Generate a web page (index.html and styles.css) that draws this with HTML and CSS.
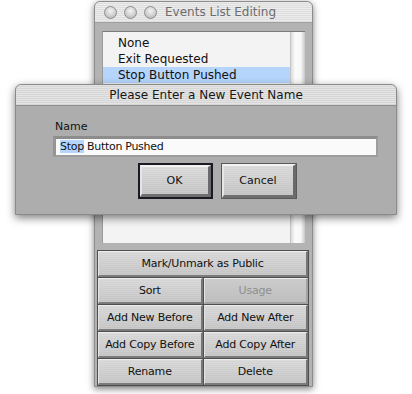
FILE: index.html
```html
<!DOCTYPE html>
<html lang="en">
<head>
    <meta charset="UTF-8">
    <title>Events List Editing</title>
    <link rel="stylesheet" href="styles.css">
</head>
<body>
    <div class="stage">

        <!-- Back window: event list -->
        <div class="window">
            <div class="titlebar">
                <div class="lights">
                    <span class="light"></span>
                    <span class="light"></span>
                    <span class="light"></span>
                </div>
                <div class="title">Events List Editing</div>
            </div>

            <div class="content">
                <div class="list">
                    <div class="items">
                        <div class="item">None</div>
                        <div class="item">Exit Requested</div>
                        <div class="item selected">Stop Button Pushed</div>
                    </div>
                    <div class="scroller"></div>
                </div>

                <div class="actions">
                    <div class="btn wide">Mark/Unmark as Public</div>
                    <div class="btn">Sort</div>
                    <div class="btn disabled">Usage</div>
                    <div class="btn">Add New Before</div>
                    <div class="btn">Add New After</div>
                    <div class="btn">Add Copy Before</div>
                    <div class="btn">Add Copy After</div>
                    <div class="btn">Rename</div>
                    <div class="btn">Delete</div>
                </div>
            </div>
        </div>

        <!-- Rename dialog, floating over the list -->
        <div class="dialog">
            <div class="dialog-title">Please Enter a New Event Name</div>
            <div class="dialog-body">
                <div class="form">
                    <label class="field-label" for="eventName">Name</label>
                    <div class="field" id="eventName"><span class="sel">Stop</span> Button Pushed</div>
                    <div class="dialog-buttons">
                        <div class="default-ring"><div class="push">OK</div></div>
                        <div class="push cancel">Cancel</div>
                    </div>
                </div>
            </div>
        </div>

    </div>
</body>
</html>
```

FILE: styles.css
```css
* {
    box-sizing: border-box;
}

body {
    margin: 0;
    background: #fff;
    font-family: 'DejaVu Sans', 'Liberation Sans', sans-serif;
    color: #111;
}

.stage {
    position: relative;
    width: 412px;
    height: 394px;
    overflow: hidden;
}

/* Back window */
.window {
    margin: 1px 0 0 94px;
    width: 219px;
    height: 386px;
    background: #b3b3b3;
    border: 1px solid #8c8c8c;
    border-radius: 6px 6px 0 0;
    box-shadow: 0 2px 7px rgba(0, 0, 0, 0.5);
}

.titlebar {
    height: 21px;
    display: flex;
    align-items: center;
    padding-left: 9px;
    border-radius: 5px 5px 0 0;
    background: repeating-linear-gradient(to bottom, #ececec 0, #ececec 1px, #dedede 1px, #dedede 2px);
    border-bottom: 1px solid #a0a0a0;
}

.lights {
    display: flex;
    gap: 7px;
}

.light {
    width: 13px;
    height: 13px;
    border-radius: 50%;
    border: 1px solid #8e8e8e;
    background: radial-gradient(circle at 50% 35%, #f4f4f4 0, #d0d0d0 55%, #a9a9a9 100%);
}

.title {
    margin-left: 8px;
    font-size: 12px;
    color: #6c6c6c;
}

.content {
    padding: 8px 0 0;
}

.list {
    margin: 0 7px;
    height: 212px;
    display: flex;
    border-top: 1px solid #7a7a7a;
    border-left: 1px solid #9a9a9a;
    background: #f3f3f3;
}

.items {
    flex: 1;
    padding-top: 3px;
}

.item {
    height: 16px;
    line-height: 16px;
    padding-left: 15px;
    font-size: 12px;
    color: #111;
}

.item.selected {
    background: #b5d5fd;
}

.scroller {
    width: 15px;
    background: linear-gradient(to right, #dcdcdc 0, #fbfbfb 30%, #f7f7f7 70%, #c8c8c8 100%);
    border-left: 1px solid #c4c4c4;
}

/* Button grid */
.actions {
    margin: 7px 3px 0 2px;
    display: grid;
    grid-template-columns: 1fr 1fr;
    grid-auto-rows: 26px;
    gap: 1px;
    padding: 1px;
    background: #4f4f4f;
}

.btn {
    display: flex;
    align-items: center;
    justify-content: center;
    font-size: 11px;
    letter-spacing: -0.2px;
    color: #111;
    background: repeating-linear-gradient(to bottom, rgba(255, 255, 255, 0.12) 0, rgba(255, 255, 255, 0.12) 1px, transparent 1px, transparent 2px),
                linear-gradient(to bottom, #d6d6d6, #c3c3c3);
    border-top: 1px solid #ededed;
    border-left: 1px solid #e4e4e4;
    border-bottom: 2px solid #7b7b7b;
    border-right: 2px solid #767676;
}

.btn.wide {
    grid-column: span 2;
}

.btn.disabled {
    color: #8f8f8f;
    background: linear-gradient(to bottom, #cbcbcb, #bfbfbf);
    border-bottom-color: #a2a2a2;
    border-right-color: #a2a2a2;
}

/* Dialog */
.dialog {
    position: absolute;
    left: 15px;
    top: 84px;
    width: 382px;
    height: 131px;
    background: #adadad;
    border: 1px solid #8a8a8a;
    border-radius: 6px 6px 0 0;
    box-shadow: 0 3px 9px rgba(0, 0, 0, 0.5);
}

.dialog-title {
    height: 21px;
    line-height: 21px;
    text-align: center;
    font-size: 12px;
    color: #161616;
    border-radius: 5px 5px 0 0;
    background: repeating-linear-gradient(to bottom, #e4e4e4 0, #e4e4e4 1px, #d6d6d6 1px, #d6d6d6 2px);
    border-bottom: 1px solid #8e8e8e;
}

.dialog-body {
    padding: 14px 0 0 37px;
}

.form {
    width: 325px;
}

.field-label {
    display: block;
    height: 13px;
    line-height: 13px;
    margin: 0 0 3px 2px;
    font-size: 11px;
    color: #111;
}

.field {
    height: 21px;
    line-height: 16px;
    padding: 0 0 0 4px;
    font-size: 11px;
    letter-spacing: -0.3px;
    color: #111;
    background: #fafafa;
    border-top: 3px solid #8d8d8d;
    border-left: 3px solid #959595;
    border-bottom: 2px solid #9d9d9d;
    border-right: 2px solid #9d9d9d;
}

.sel {
    background: #b5d5fd;
}

.dialog-buttons {
    margin-top: 6px;
    display: flex;
    justify-content: center;
    align-items: center;
    gap: 9px;
    padding-left: 2px;
}

.default-ring {
    width: 75px;
    height: 36px;
    border: 2px solid #1c1824;
}

.push {
    width: 100%;
    height: 100%;
    display: flex;
    align-items: center;
    justify-content: center;
    font-size: 11px;
    color: #111;
    background: repeating-linear-gradient(to bottom, rgba(255, 255, 255, 0.12) 0, rgba(255, 255, 255, 0.12) 1px, transparent 1px, transparent 2px),
                linear-gradient(to bottom, #d8d8d8, #c2c2c2);
    border-top: 2px solid #f2f2f2;
    border-left: 2px solid #e6e6e6;
    border-bottom: 3px solid #6f6f6f;
    border-right: 3px solid #6a6a6a;
}

.push.cancel {
    width: 74px;
    height: 34px;
    outline: 1px solid #5a5a5a;
}
```
